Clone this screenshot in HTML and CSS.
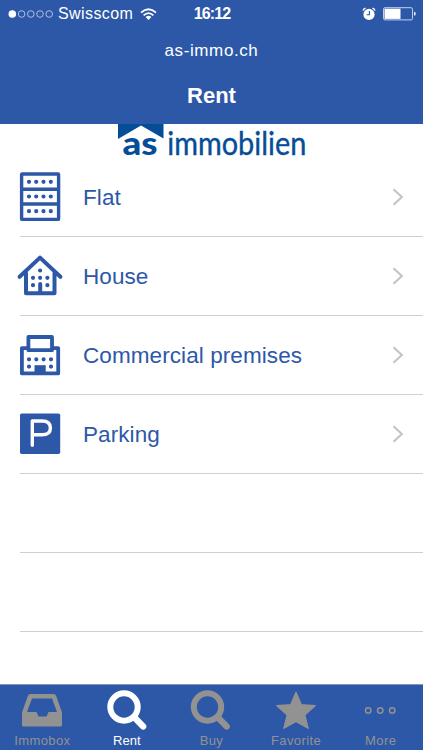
FILE: index.html
```html
<!DOCTYPE html>
<html lang="en">
<head>
<meta charset="utf-8">
<meta name="viewport" content="width=device-width">
<title>Rent</title>
<link rel="stylesheet" href="styles.css">
</head>
<body>
<div class="app">
  <header class="header">
    <div class="status">
      <div class="carrier">
        <svg class="signal" width="46" height="10" viewBox="0 0 46 10"><circle cx="4.3" cy="5" r="3.8" fill="#fff"/><g fill="none" stroke="#bcc9e6" stroke-width=".9"><circle cx="13.6" cy="5" r="3.3"/><circle cx="22.8" cy="5" r="3.3"/><circle cx="32" cy="5" r="3.3"/><circle cx="41.2" cy="5" r="3.3"/></g></svg>
        <span class="carrier-name">Swisscom</span>
        <svg class="wifi" width="17" height="12" viewBox="0 0 17 12"><g fill="none" stroke="#fff" stroke-width="1.8"><path d="M1 4.6Q8.5-2.2 16 4.6"/><path d="M3.6 7.4Q8.5 2.9 13.4 7.4"/></g><path d="M5.6 9Q8.5 6.5 11.4 9L8.5 12Z" fill="#fff"/></svg>
      </div>
      <div class="clock">16:12</div>
      <div class="power">
        <svg width="14" height="14" viewBox="0 0 14 14"><circle cx="7" cy="7.4" r="5.6" fill="#fff"/><path d="M1 3.6Q1.5 1.7 3.6 1.1M10.4 1.1Q12.5 1.7 13 3.6" fill="none" stroke="#fff" stroke-width="1.3"/><path d="M7.4 4v3.8H4.6" fill="none" stroke="#2d58a7" stroke-width="1.1"/></svg>
        <svg width="33" height="14" viewBox="0 0 33 14"><rect x=".5" y=".7" width="29" height="12.2" rx="1.5" fill="none" stroke="#c5d1e9"/><rect x="1.5" y="1.7" width="16" height="10.2" fill="#fff"/><path d="M31 4.8q1.8 0 1.8 2t-1.8 2z" fill="#dfe6f3"/></svg>
      </div>
    </div>
    <div class="site">as-immo.ch</div>
    <h1 class="title">Rent</h1>
  </header>
  <main class="content">
    <div class="brand">
      <svg width="190" height="34" viewBox="0 0 190 34"><path d="M0 0H45.5V14.5L23 1.5 0 15Z" fill="#064d98"/><text class="brand-as" x="4.5" y="30.5" textLength="35" lengthAdjust="spacingAndGlyphs">as</text><text class="brand-name" x="49.300" y="30.500" textLength="139" lengthAdjust="spacingAndGlyphs">immobilien</text></svg>
    </div>
    <ul class="list">
      <li class="row">
        <svg class="icon" width="46" height="50" viewBox="0 0 46 50"><g fill="none" stroke="#2d58a7" stroke-width="3.4"><rect x="4.6" y="2" width="37" height="45.4" rx=".5"/><path d="M4 17.3h38M4 32h38"/></g><path class="dots" d="M12 9.8h.01M19.2 9.8h.01M26.5 9.8h.01M33.8 9.8h.01M12 24.5h.01M19.2 24.5h.01M26.5 24.5h.01M33.8 24.5h.01M12 39.2h.01M19.2 39.2h.01M26.5 39.2h.01M33.8 39.2h.01"/></svg>
        <span class="label">Flat</span><svg class="chevron" width="12" height="18" viewBox="0 0 12 18"><path d="M1.5 1.3L9.8 9 1.5 16.7"/></svg>
      </li>
      <li class="row">
        <svg class="icon" width="46" height="50" viewBox="0 0 46 50"><path d="M2.6 25.8L23 6.6l20.4 19.2M9 22v20.2h28.5V22M23.2 42V33" fill="none" stroke="#2d58a7" stroke-width="4" stroke-linecap="round" stroke-linejoin="round"/><path class="dots" d="M23.1 19.5h.01M16 26.8h.01M23.1 26.8h.01M30.4 26.8h.01M16 34.2h.01M30.4 34.2h.01"/></svg>
        <span class="label">House</span><svg class="chevron" width="12" height="18" viewBox="0 0 12 18"><path d="M1.5 1.3L9.8 9 1.5 16.7"/></svg>
      </li>
      <li class="row">
        <svg class="icon" width="46" height="50" viewBox="0 0 46 50"><path d="M11 18.2H4.9v25.2h36.3V18.2H35M11.4 7H35v13.2H11.4Z" fill="none" stroke="#2d58a7" stroke-width="3.8" stroke-linejoin="round"/><path d="M17.5 35.2h11.2V44H17.5Z" fill="#2d58a7"/><path class="dots" d="M12 29.3h.01M19.3 29.3h.01M26.6 29.3h.01M34 29.3h.01M12 36.6h.01M34 36.6h.01"/></svg>
        <span class="label">Commercial premises</span><svg class="chevron" width="12" height="18" viewBox="0 0 12 18"><path d="M1.5 1.3L9.8 9 1.5 16.7"/></svg>
      </li>
      <li class="row">
        <svg class="icon" width="46" height="50" viewBox="0 0 46 50"><rect x="3" y="4.500" width="40.200" height="40.500" rx="1.800" fill="#2d58a7"/><path d="M15.300 36.300V12H25q8.400 0 8.400 6.900T25 25.800h-9.500" fill="none" stroke="#fff" stroke-width="3.400" stroke-linecap="round" stroke-linejoin="round"/></svg>
        <span class="label">Parking</span><svg class="chevron" width="12" height="18" viewBox="0 0 12 18"><path d="M1.5 1.3L9.8 9 1.5 16.7"/></svg>
      </li>
      <li class="row"></li>
      <li class="row"></li>
    </ul>
  </main>
  <nav class="tabs">
    <div class="tab"><svg width="42" height="46" viewBox="0 0 42 46"><path fill="currentColor" fill-rule="evenodd" d="M9.500 9h23q2 0 2.700 2L41 27.500V40q0 1.500-1.500 1.500h-37Q1 41.500 1 40V27.500L6.800 11q.7-2 2.700-2ZM11 13.500L6 27h9.500l2 4.500h8l2-4.500H36L31 13.500Z"/></svg><span>Immobox</span></div>
    <div class="tab active"><svg width="42" height="46" viewBox="0 0 42 46"><g fill="none" stroke="currentColor"><circle cx="18" cy="22" r="13.700" stroke-width="6"/><path d="M28 32l9.200 9.500" stroke-width="6.300" stroke-linecap="round"/></g></svg><span>Rent</span></div>
    <div class="tab"><svg width="42" height="46" viewBox="0 0 42 46"><g fill="none" stroke="currentColor"><circle cx="17.500" cy="22" r="13.700" stroke-width="6"/><path d="M27.500 32l9.200 9.500" stroke-width="6.300" stroke-linecap="round"/></g></svg><span>Buy</span></div>
    <div class="tab"><svg width="42" height="46" viewBox="0 0 42 46"><path d="M21 7.500l5.300 12.300 13.700 1-10.300 9.200 3.300 13.200L21 36.300 9 43.200l3.300-13.200L2 20.800l13.700-1Z" fill="currentColor" stroke="currentColor" stroke-width="1.500" stroke-linejoin="round"/></svg><span>Favorite</span></div>
    <div class="tab"><svg width="42" height="46" viewBox="0 0 42 46"><g fill="none" stroke="currentColor" stroke-width="1.500"><circle cx="8.200" cy="25.500" r="2.700"/><circle cx="20.200" cy="25.500" r="2.700"/><circle cx="32.200" cy="25.500" r="2.700"/></g></svg><span>More</span></div>
  </nav>
</div>
</body>
</html>
```
FILE: styles.css
```css
* { box-sizing: border-box; }
body { margin: 0; background: #fff; font-family: "Liberation Sans", Arial, sans-serif; }
svg { display: block; flex: none; overflow: visible; }
.app { width: 423px; height: 750px; display: flex; flex-direction: column; overflow: hidden; }
.header { height: 124px; flex: none; background: #2d58a7; color: #fff; text-align: center; }
.status { height: 28px; display: grid; grid-template-columns: 1fr auto 1fr; align-items: center; padding: 0 7px 0 8px; }
.carrier { display: flex; align-items: center; }
.carrier-name { font-size: 16px; letter-spacing: .4px; margin-left: 4px; line-height: 28px; }
.wifi { margin-left: 7px; }
.clock { font-size: 16px; font-weight: 700; letter-spacing: -.9px; }
.power { display: flex; justify-content: flex-end; align-items: center; gap: 7px; }
.site { height: 44px; line-height: 45px; font-size: 17px; letter-spacing: .6px; }
.title { margin: 0; height: 46px; line-height: 47px; font-size: 22px; font-weight: 700; }
.content { flex: 1; min-height: 0; }
.brand { height: 34px; padding-left: 118px; }
.brand-as { font: 900 33px Lato, sans-serif; fill: #064d98; }
.brand-name { font: 400 33px Lato, sans-serif; fill: #064d98; stroke: #064d98; stroke-width: .4px; }
.list { list-style: none; margin: 0; padding: 0 0 0 20px; }
.row { height: 79px; border-bottom: 1px solid #d0d0d2; display: flex; align-items: center; padding-right: 19px; }
.icon { margin-left: -3px; }
.dots { fill: none; stroke: #2d58a7; stroke-width: 4.2; stroke-linecap: round; }
.label { flex: 1; margin-left: 20px; padding-top: 2px; color: #2d58a7; font-size: 22.5px; letter-spacing: .08px; line-height: 30px; }
.chevron { fill: none; stroke: #c5c5c9; stroke-width: 2.2; }
.tabs { height: 66px; flex: none; background: #2d58a7; border-top: 1px solid #8498bd; display: grid; grid-template-columns: repeat(5, 84.6px); }
.tab { display: flex; flex-direction: column; align-items: center; color: #929292; font-size: 13px; letter-spacing: .4px; line-height: 20px; }
.tab.active { color: #fff; letter-spacing: .1px; }
```
